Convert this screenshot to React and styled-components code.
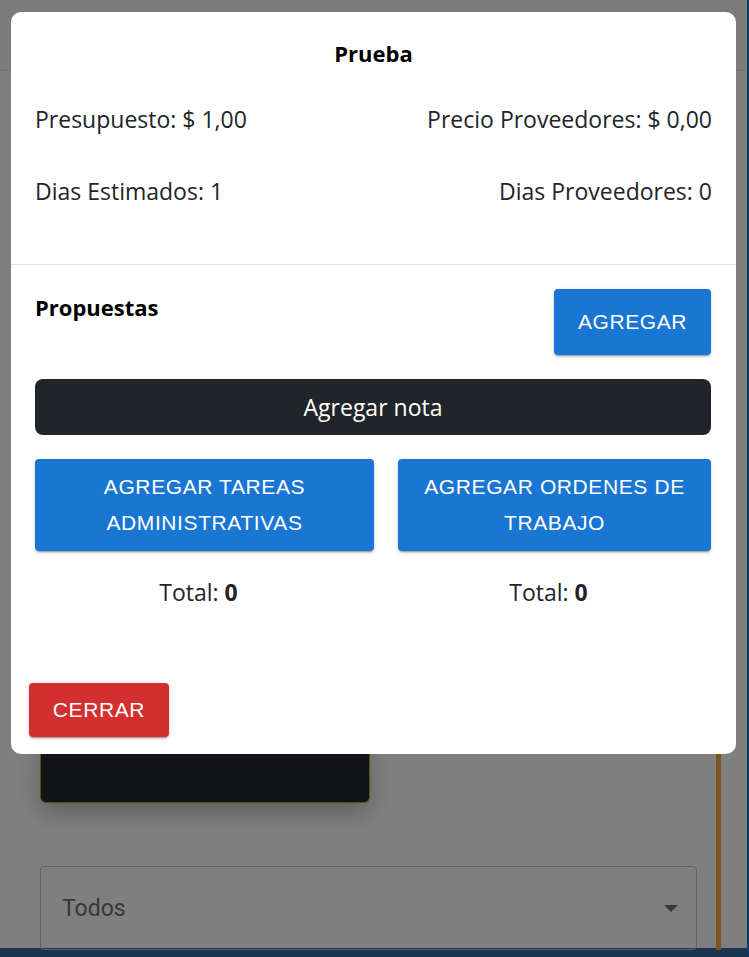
import React from "react";
import styled, { createGlobalStyle } from "styled-components";

const GlobalStyle = createGlobalStyle`
  html, body {
    margin: 0;
    padding: 0;
    height: 100%;
    overflow: hidden;
  }
  body {
    font-family: "Open Sans", "Liberation Sans", sans-serif;
    background: #ffffff;
  }
  * {
    box-sizing: border-box;
  }
`;

// ---- page behind the dialog ----

const Page = styled.div`
  width: 749px;
  height: 957px;
  display: flex;
  flex-direction: column;
  background: #ffffff;
  border-right: 2px solid #1976d2;
  border-bottom: 9px solid #36699e;
`;

const TopBar = styled.header`
  height: 71px;
  flex-shrink: 0;
  background: #f7f7f7;
  border-bottom: 1px solid #e4e4e4;
`;

const PageBody = styled.main`
  flex: 1;
  display: flex;
  padding: 0 26px 0 40px;
  gap: 19px;
`;

const PageColumn = styled.div`
  flex: 1;
  display: flex;
  flex-direction: column;
  padding-top: 670px;
`;

const DarkCard = styled.div`
  width: 330px;
  height: 62px;
  background: #25272c;
  border: 1px solid #c89a10;
  border-top: none;
  border-radius: 0 0 6px 6px;
  box-shadow: 0 10px 24px rgba(0, 0, 0, 0.25);
`;

const FilterSelect = styled.div`
  margin-top: 63px;
  height: 84px;
  border: 1px solid #c4c4c4;
  border-radius: 4px;
  display: flex;
  align-items: center;
  justify-content: space-between;
  padding: 0 18px 0 21px;
  font-family: Roboto, "Liberation Sans", sans-serif;
  font-size: 23px;
  color: #707070;
`;

const Caret = styled.span`
  width: 0;
  height: 0;
  border-left: 7px solid transparent;
  border-right: 7px solid transparent;
  border-top: 7px solid #707070;
`;

const OrangeRail = styled.div`
  width: 5px;
  margin-top: 683px;
  background: #f5a844;
`;

// ---- dialog ----

const Backdrop = styled.div`
  position: fixed;
  inset: 0;
  background: rgba(0, 0, 0, 0.5);
`;

const Dialog = styled.div`
  position: fixed;
  top: 12px;
  left: 11px;
  width: 725px;
  height: 742px;
  background: #ffffff;
  border-radius: 10px;
  display: flex;
  flex-direction: column;
  color: #212529;
`;

const Summary = styled.section`
  padding: 26px 24px 0;
  border-bottom: 1px solid #dee2e6;
  height: 253px;
`;

const Title = styled.h2`
  margin: 0 0 36px;
  font-size: 22px;
  font-weight: 700;
  line-height: 30px;
  text-align: center;
  color: #000000;
`;

const InfoRow = styled.div`
  display: flex;
  justify-content: space-between;
  font-size: 23px;
  font-weight: 400;
  line-height: 30px;
  margin-bottom: 42px;
`;

const Proposals = styled.section`
  flex: 1;
  padding: 24px 25px 0 24px;
  display: flex;
  flex-direction: column;
`;

const ProposalsHead = styled.div`
  display: flex;
  justify-content: space-between;
  align-items: flex-start;
`;

const SectionTitle = styled.h3`
  margin: 0;
  padding-top: 3px;
  font-size: 22px;
  font-weight: 700;
  line-height: 30px;
  color: #000000;
`;

const MuiButton = styled.button`
  border: none;
  border-radius: 4px;
  background: ${(p) => (p.$color === "red" ? "#d32f2f" : "#1976d2")};
  color: #ffffff;
  font-family: "Liberation Sans", Arial, sans-serif;
  font-weight: 400;
  font-size: 21px;
  text-transform: uppercase;
  letter-spacing: 0.6px;
  box-shadow: 0 3px 1px -2px rgba(0, 0, 0, 0.2), 0 2px 2px 0 rgba(0, 0, 0, 0.14),
    0 1px 5px 0 rgba(0, 0, 0, 0.12);
  cursor: pointer;
`;

const AddButton = styled(MuiButton)`
  width: 157px;
  height: 66px;
`;

const NoteButton = styled.button`
  margin-top: 24px;
  height: 56px;
  border: none;
  border-radius: 8px;
  background: #212529;
  color: #ffffff;
  font-family: "Open Sans", "Liberation Sans", sans-serif;
  font-size: 23px;
`;

const TaskGrid = styled.div`
  margin-top: 24px;
  display: grid;
  grid-template-columns: 339px 1fr;
  column-gap: 24px;
`;

const TaskColumn = styled.div`
  display: flex;
  flex-direction: column;
  align-items: stretch;
`;

const TaskButton = styled(MuiButton)`
  height: 92px;
  line-height: 36px;
  padding: 10px 16px;
`;

const Total = styled.p`
  margin: 26px 0 0;
  padding-right: 12px;
  text-align: center;
  font-size: 23px;
  line-height: 30px;

  b {
    font-weight: 700;
  }
`;

const Footer = styled.footer`
  padding: 0 0 17px 18px;
`;

const CloseButton = styled(MuiButton)`
  width: 140px;
  height: 54px;
`;

const tasks = [
  { label: "Agregar tareas administrativas", total: 0 },
  { label: "Agregar ordenes de trabajo", total: 0 },
];

export default function App() {
  return (
    <>
      <GlobalStyle />
      <Page>
        <TopBar />
        <PageBody>
          <PageColumn>
            <DarkCard />
            <FilterSelect>
              Todos
              <Caret />
            </FilterSelect>
          </PageColumn>
          <OrangeRail />
        </PageBody>
      </Page>
      <Backdrop />
      <Dialog>
        <Summary>
          <Title>Prueba</Title>
          <InfoRow>
            <span>Presupuesto: $ 1,00</span>
            <span>Precio Proveedores: $ 0,00</span>
          </InfoRow>
          <InfoRow>
            <span>Dias Estimados: 1</span>
            <span>Dias Proveedores: 0</span>
          </InfoRow>
        </Summary>
        <Proposals>
          <ProposalsHead>
            <SectionTitle>Propuestas</SectionTitle>
            <AddButton>Agregar</AddButton>
          </ProposalsHead>
          <NoteButton>Agregar nota</NoteButton>
          <TaskGrid>
            {tasks.map((t) => (
              <TaskColumn key={t.label}>
                <TaskButton>{t.label}</TaskButton>
                <Total>
                  Total: <b>{t.total}</b>
                </Total>
              </TaskColumn>
            ))}
          </TaskGrid>
        </Proposals>
        <Footer>
          <CloseButton $color="red">Cerrar</CloseButton>
        </Footer>
      </Dialog>
    </>
  );
}
